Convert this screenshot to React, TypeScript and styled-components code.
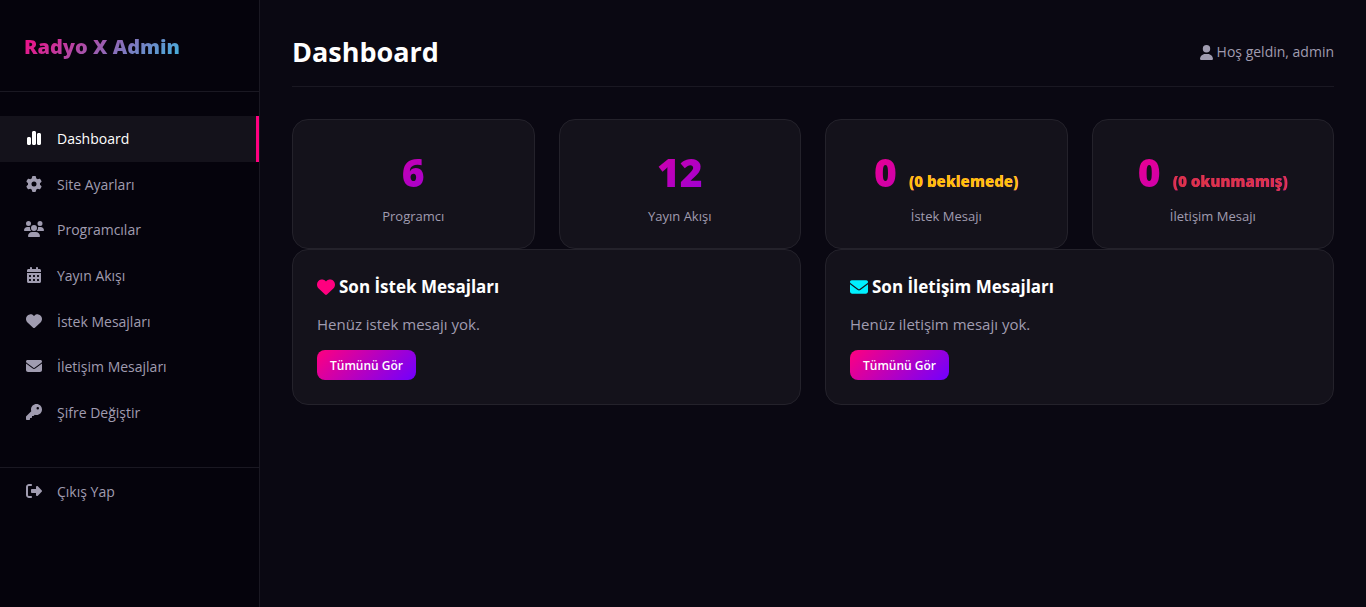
import React from "react";
import styled, { createGlobalStyle } from "styled-components";
import type { IconType } from "react-icons";
import {
  FaCalendarDays,
  FaChartSimple,
  FaEnvelope,
  FaGear,
  FaHeart,
  FaKey,
  FaRightFromBracket,
  FaUser,
  FaUsers,
} from "react-icons/fa6";

const color = {
  page: "#0a0812",
  sidebar: "#05030c",
  surface: "#14121b",
  line: "#1a1822",
  cardLine: "#24222b",
  text: "#ffffff",
  muted: "#a09cb0",
  pink: "#ff007f",
  cyan: "#00f0ff",
  violet: "#7000ff",
  warning: "#ffc107",
  danger: "#dc3545",
};

const GlobalStyle = createGlobalStyle`
  *, *::before, *::after { box-sizing: border-box; }
  body {
    margin: 0;
    background: ${color.page};
    color: ${color.text};
    font-family: "Segoe UI", "Open Sans", "Noto Sans", sans-serif;
    font-size: 14px;
  }
  h1, h2, p, ul { margin: 0; padding: 0; }
  ul { list-style: none; }
`;

const Layout = styled.div`
  display: flex;
  min-height: 100vh;
`;

const Sidebar = styled.aside`
  flex: 0 0 260px;
  background: ${color.sidebar};
  border-right: 1px solid ${color.line};
`;

const Brand = styled.div`
  padding: 24px 24px 22px;
  border-bottom: 1px solid ${color.line};
  font-size: 20px;
  line-height: 45px;
  font-weight: 800;

  span {
    display: block;
    background: linear-gradient(135deg, ${color.pink}, ${color.cyan});
    -webkit-background-clip: text;
    background-clip: text;
    color: transparent;
  }
`;

const NavList = styled.ul`
  display: grid;
  grid-auto-rows: 1fr;
  min-height: 319px;
  margin: 24px 0 32px;
`;

const NavItem = styled.li`
  display: flex;
`;

const NavLink = styled.a<{ $active?: boolean }>`
  flex: 1;
  display: flex;
  align-items: center;
  gap: 13px;
  padding: 1px 24px 0;
  line-height: 22px;
  text-decoration: none;
  color: ${(p) => (p.$active ? color.text : color.muted)};
  background: ${(p) => (p.$active ? color.surface : "transparent")};
  border-right: 3px solid ${(p) => (p.$active ? color.pink : "transparent")};
`;

const NavIcon = styled.span`
  display: flex;
  margin-bottom: 2px;

  svg {
    flex: none;
    width: 20px;
    height: 16px;
  }
`;

const SidebarFooter = styled.div`
  display: flex;
  min-height: 47px;
  border-top: 1px solid ${color.line};
`;

const Main = styled.main`
  flex: 1;
  min-width: 0;
  padding: 32px;
`;

const PageHeader = styled.header`
  display: flex;
  justify-content: space-between;
  align-items: center;
  padding-bottom: 14px;
  margin-bottom: 32px;
  border-bottom: 1px solid ${color.line};
`;

const PageTitle = styled.h1`
  font-size: 27px;
  line-height: 40px;
  font-weight: 700;
`;

const Welcome = styled.div`
  display: flex;
  align-items: center;
  gap: 4px;
  color: ${color.muted};
  font-size: 14px;
  line-height: 20px;

  svg {
    flex: none;
    width: 13px;
    height: 15px;
  }
`;

const CardGrid = styled.div<{ $columns: number }>`
  display: grid;
  grid-template-columns: repeat(${(p) => p.$columns}, minmax(0, 1fr));
  column-gap: 24px;
`;

const Card = styled.section`
  padding: 24px;
  background: ${color.surface};
  border: 1px solid ${color.cardLine};
  border-radius: 16px;
`;

const StatCard = styled(Card)`
  text-align: center;
`;

const StatValue = styled.div`
  font-size: 39px;
  line-height: 56px;
  font-weight: 800;
  white-space: nowrap;
  background: linear-gradient(135deg, ${color.pink}, ${color.violet});
  -webkit-background-clip: text;
  background-clip: text;
  -webkit-text-fill-color: transparent;
`;

const StatNote = styled.span<{ $tone: string }>`
  margin-left: 12px;
  font-size: 15px;
  line-height: 20px;
  color: ${(p) => p.$tone};
  -webkit-text-fill-color: ${(p) => p.$tone};
`;

const StatLabel = styled.div`
  padding-top: 8px;
  color: ${color.muted};
  font-size: 13px;
  line-height: 16px;
`;

const CardTitle = styled.h2<{ $tone: string }>`
  display: flex;
  align-items: center;
  gap: 4px;
  font-size: 17px;
  line-height: 26px;
  font-weight: 700;

  svg {
    flex: none;
    color: ${(p) => p.$tone};
    font-size: 18px;
  }
`;

const EmptyText = styled.p`
  padding: 12px 0 14px;
  color: ${color.muted};
  font-size: 15px;
  line-height: 24px;
`;

const ViewAll = styled.a`
  display: inline-block;
  padding: 6px 13px 4px;
  border-radius: 8px;
  background: linear-gradient(135deg, ${color.pink}, ${color.violet});
  color: ${color.text};
  font-size: 12px;
  line-height: 20px;
  font-weight: 600;
  text-decoration: none;
  vertical-align: top;
`;

const navigation: { label: string; icon: IconType }[] = [
  { label: "Dashboard", icon: FaChartSimple },
  { label: "Site Ayarları", icon: FaGear },
  { label: "Programcılar", icon: FaUsers },
  { label: "Yayın Akışı", icon: FaCalendarDays },
  { label: "İstek Mesajları", icon: FaHeart },
  { label: "İletişim Mesajları", icon: FaEnvelope },
  { label: "Şifre Değiştir", icon: FaKey },
];

const stats: { value: number; label: string; note?: string; tone?: string }[] = [
  { value: 6, label: "Programcı" },
  { value: 12, label: "Yayın Akışı" },
  { value: 0, label: "İstek Mesajı", note: "(0 beklemede)", tone: color.warning },
  { value: 0, label: "İletişim Mesajı", note: "(0 okunmamış)", tone: color.danger },
];

const inboxes = [
  { title: "Son İstek Mesajları", empty: "Henüz istek mesajı yok.", icon: FaHeart, tone: color.pink },
  { title: "Son İletişim Mesajları", empty: "Henüz iletişim mesajı yok.", icon: FaEnvelope, tone: color.cyan },
];

export default function App() {
  return (
    <>
      <GlobalStyle />
      <Layout>
        <Sidebar>
          <Brand><span>Radyo X Admin</span></Brand>
          <nav>
            <NavList>
              {navigation.map(({ label, icon: Icon }, i) => (
                <NavItem key={label}>
                  <NavLink href="#" $active={i === 0} aria-current={i === 0 ? "page" : undefined}>
                    <NavIcon><Icon /></NavIcon>
                    {label}
                  </NavLink>
                </NavItem>
              ))}
            </NavList>
            <SidebarFooter>
              <NavLink href="#">
                <NavIcon><FaRightFromBracket /></NavIcon>
                Çıkış Yap
              </NavLink>
            </SidebarFooter>
          </nav>
        </Sidebar>
        <Main>
          <PageHeader>
            <PageTitle>Dashboard</PageTitle>
            <Welcome><FaUser />Hoş geldin, admin</Welcome>
          </PageHeader>
          <CardGrid $columns={4}>
            {stats.map((s) => (
              <StatCard key={s.label}>
                <StatValue>
                  {s.value}
                  {s.note && <StatNote $tone={s.tone ?? color.text}>{s.note}</StatNote>}
                </StatValue>
                <StatLabel>{s.label}</StatLabel>
              </StatCard>
            ))}
          </CardGrid>
          <CardGrid $columns={2}>
            {inboxes.map(({ title, empty, icon: Icon, tone }) => (
              <Card key={title}>
                <CardTitle $tone={tone}><Icon />{title}</CardTitle>
                <EmptyText>{empty}</EmptyText>
                <ViewAll href="#">Tümünü Gör</ViewAll>
              </Card>
            ))}
          </CardGrid>
        </Main>
      </Layout>
    </>
  );
}
